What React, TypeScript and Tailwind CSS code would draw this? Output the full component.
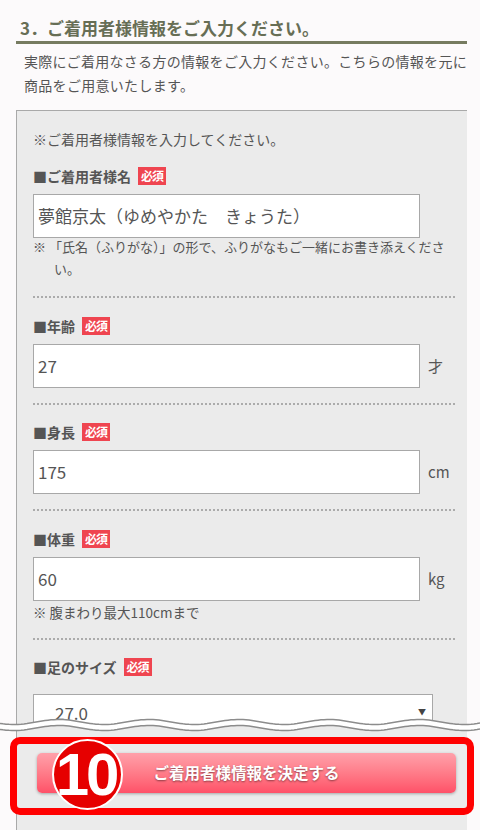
import React from 'react'

const font = "font-['Noto_Sans_CJK_JP','Noto_Sans',sans-serif]"

// 破れ線（波形）の座標
function wavePoints() {
  const top: string[] = []
  const bot: string[] = []
  for (let x = 0; x <= 480; x += 3) {
    const y = 8 + 2.5 * Math.sin((x / 90) * Math.PI * 2 + 0.6)
    top.push(`${x},${y.toFixed(2)}`)
    bot.push(`${x},${(y + 6).toFixed(2)}`)
  }
  return { top, bot }
}

function Label({ text }: { text: string }) {
  return (
    <div className="flex items-center h-[22px] text-[14px] font-bold text-[#555] leading-[22px]">
      <span>■{text}</span>
      <span className="ml-[7px] inline-flex items-center justify-center w-[28px] h-[18px] bg-[#ef4550] text-white text-[12px] font-bold leading-none tracking-[-1px]">
        必須
      </span>
    </div>
  )
}

function Field({ value, unit }: { value: string; unit?: string }) {
  return (
    <div className="flex items-center mt-[7px]">
      <div className="w-[387px] h-[44px] border border-[#a8a8a8] bg-white px-[4px] flex items-center text-[17px] text-[#555]">
        {value}
      </div>
      {unit && <span className="ml-[8px] text-[15px] text-[#555]">{unit}</span>}
    </div>
  )
}

function Dots({ className }: { className: string }) {
  return <div className={'w-[422px] border-t-2 border-dotted border-[#ababab] ' + className} />
}

export default function App() {
  const w = wavePoints()
  const fill = `M${w.top.join(' L')} L${[...w.bot].reverse().join(' L')} Z`

  return (
    <div className={'relative w-[480px] h-[830px] overflow-hidden bg-[#fcfafb] ' + font}>
      {/* 見出し */}
      <div className="ml-[16px] w-[451px] pt-[16px] pl-[4px] pb-[1px] border-b-[3px] border-[#767b60]">
        <h2 className="text-[17px] leading-[24px] font-bold text-[#676e55]">3．ご着用者様情報をご入力ください。</h2>
      </div>
      <p className="mt-[5px] ml-[24px] w-[450px] text-[14px] leading-[24px] tracking-[0.3px] text-[#555]">
        実際にご着用なさる方の情報をご入力ください。こちらの情報を元に商品をご用意いたします。
      </p>

      {/* 入力パネル */}
      <div className="mt-[13px] ml-[16px] w-[451px] h-[720px] border-l border-t border-[#a9a9a9] bg-[#ebebeb] pl-[16px] pt-[17px]">
        <p className="text-[14px] leading-[22px] text-[#555]">※ご着用者様情報を入力してください。</p>

        <div className="mt-[15px]">
          <Label text="ご着用者様名" />
          <Field value="夢館京太（ゆめやかた　きょうた）" />
          <p className="mt-[-2px] w-[422px] pl-[21px] -indent-[21px] text-[13px] leading-[22px] text-[#555]">
            ※ 「氏名（ふりがな）」の形で、ふりがなもご一緒にお書き添えください。
          </p>
        </div>

        <Dots className="mt-[16px]" />
        <div className="mt-[17px]">
          <Label text="年齢" />
          <Field value="27" unit="才" />
        </div>

        <Dots className="mt-[15px]" />
        <div className="mt-[16px]">
          <Label text="身長" />
          <Field value="175" unit="cm" />
        </div>

        <Dots className="mt-[15px]" />
        <div className="mt-[17px]">
          <Label text="体重" />
          <Field value="60" unit="kg" />
          <p className="text-[13.5px] leading-[22px] text-[#555]">※ 腹まわり最大110cmまで</p>
        </div>

        <Dots className="mt-[15px]" />
        <div className="mt-[16px]">
          <Label text="足のサイズ" />
          <div className="mt-[16px] h-[32px] overflow-hidden">
            <div className="relative w-[400px] h-[44px] border border-[#a8a8a8] bg-white pl-[21px] pt-[6px] text-[17px] leading-[24px] text-[#555]">
              27.0
              <span className="absolute right-[6px] top-[13px] text-[8px] leading-none text-[#444]">▼</span>
            </div>
          </div>
        </div>

        {/* 決定ボタン */}
        <button className="mt-[27px] ml-[4px] w-[419px] h-[40px] rounded-[5px] bg-gradient-to-b from-[#ffa0aa] to-[#ff5068] shadow-[0_1px_3px_rgba(0,0,0,0.3)] text-white text-[15.5px] font-bold [text-shadow:0_1px_2px_rgba(0,0,0,0.45)]">
          ご着用者様情報を決定する
        </button>
      </div>

      {/* 破れ線 */}
      <svg className="absolute left-0 top-[714px]" width="480" height="22" viewBox="0 0 480 22">
        <path d={fill} fill="#ffffff" />
        <polyline points={w.top.join(' ')} fill="none" stroke="#8c8c8c" strokeWidth="1.5" />
        <polyline points={w.bot.join(' ')} fill="none" stroke="#8c8c8c" strokeWidth="1.5" />
      </svg>

      {/* 注釈 */}
      <div className="absolute left-[10px] top-[737px] w-[464px] h-[78px] rounded-[10px] border-[7px] border-[#ff0000]" />
      <div className="absolute left-[52px] top-[739px] w-[71px] h-[71px] rounded-full bg-[#e60000] border-2 border-white flex items-center justify-center">
        <span className="font-['Liberation_Sans',Arial,sans-serif] font-bold text-white text-[60px] leading-none tracking-[-3px] pr-[3px]">10</span>
      </div>
    </div>
  )
}
